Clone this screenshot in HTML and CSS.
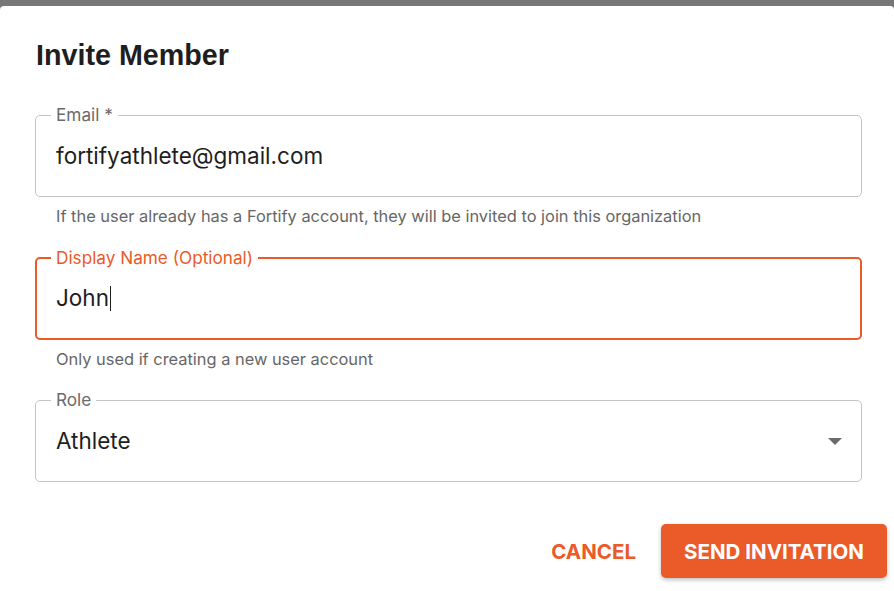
FILE: index.html
```html
<!DOCTYPE html>
<html>
<head>
<meta charset="utf-8">
<link rel="stylesheet" href="styles.css">
</head>
<body>
<div class="backdrop"></div>
<div class="dialog">
  <h2 class="title">Invite Member</h2>
  <div class="form">
    <div class="field">
      <fieldset class="box">
        <legend class="label">Email *</legend>
        <div class="value">fortifyathlete@gmail.com</div>
      </fieldset>
      <p class="helper">If the user already has a Fortify account, they will be invited to join this organization</p>
    </div>
    <div class="field">
      <fieldset class="box focused">
        <legend class="label">Display Name (Optional)</legend>
        <div class="value">John<span class="caret"></span></div>
      </fieldset>
      <p class="helper short">Only used if creating a new user account</p>
    </div>
    <div class="field">
      <fieldset class="box">
        <legend class="label">Role</legend>
        <div class="value select"><span>Athlete</span><span class="arrow"></span></div>
      </fieldset>
    </div>
  </div>
  <div class="actions">
    <button class="btn text">CANCEL</button>
    <button class="btn primary">SEND INVITATION</button>
  </div>
</div>
</body>
</html>
```
FILE: styles.css
```css
html, body {
  margin: 0;
  padding: 0;
  background: #777777;
  height: 591px;
  overflow: hidden;
}
.backdrop {
  height: 6px;
}
.dialog {
  background: #ffffff;
  border-radius: 4px;
  height: 590px;
  box-sizing: border-box;
  padding: 0 32px 0 35px;
  font-family: Inter, "Liberation Sans", sans-serif;
}
.title {
  margin: 0;
  padding: 33px 0 0 1px;
  font-family: "Liberation Sans", Arial, sans-serif;
  font-weight: bold;
  font-size: 28.7px;
  line-height: 32px;
  color: #1e1e1e;
  height: 66px;
  box-sizing: border-box;
}
.form {
  display: flex;
  flex-direction: column;
}
.field {
  margin-top: 33px;
}
.field + .field {
  margin-top: 0;
}
.box {
  margin: 0;
  padding: 0 20px;
  border: 1px solid #c4c4c4;
  border-radius: 5px;
  min-width: 0;
}
.label {
  margin-left: -5px;
  padding: 0 5px;
  font-size: 17.2px;
  line-height: 20px;
  color: #6b6b6b;
}
.value {
  padding-top: 14px;
  padding-bottom: 23px;
  font-size: 22.5px;
  line-height: 34px;
  color: #1e1e1e;
  display: flex;
  align-items: center;
}
.focused {
  border: 2px solid #eb5a29;
  padding: 0 19px;
}
.focused .label {
  color: #eb5a29;
}
.focused .value {
  padding-top: 13px;
  padding-bottom: 23px;
}
.caret {
  display: inline-block;
  width: 1.5px;
  height: 25px;
  background: #1e1e1e;
  margin-left: 1px;
}
.helper {
  margin: 0;
  padding: 9px 0 0 21px;
  height: 51px;
  box-sizing: border-box;
  font-size: 16.4px;
  line-height: 20px;
  color: #666666;
}
.helper.short {
  height: 50px;
}
.select {
  justify-content: space-between;
}
.arrow {
  width: 0;
  height: 0;
  border-left: 7px solid transparent;
  border-right: 7px solid transparent;
  border-top: 7px solid #6b6b6b;
  margin-right: -1px;
}
.actions {
  display: flex;
  justify-content: flex-end;
  align-items: center;
  gap: 25px;
  margin-top: 42px;
  margin-right: -25px;
}
.btn {
  font-family: Inter, "Liberation Sans", sans-serif;
  font-weight: bold;
  font-size: 20.5px;
  border: none;
  cursor: pointer;
}
.text {
  background: transparent;
  color: #eb5a29;
  padding: 0;
}
.primary {
  background: #eb5a29;
  color: #ffffff;
  width: 226px;
  height: 54px;
  border-radius: 5px;
  box-shadow: 0 2px 4px rgba(0,0,0,0.25);
}
```
